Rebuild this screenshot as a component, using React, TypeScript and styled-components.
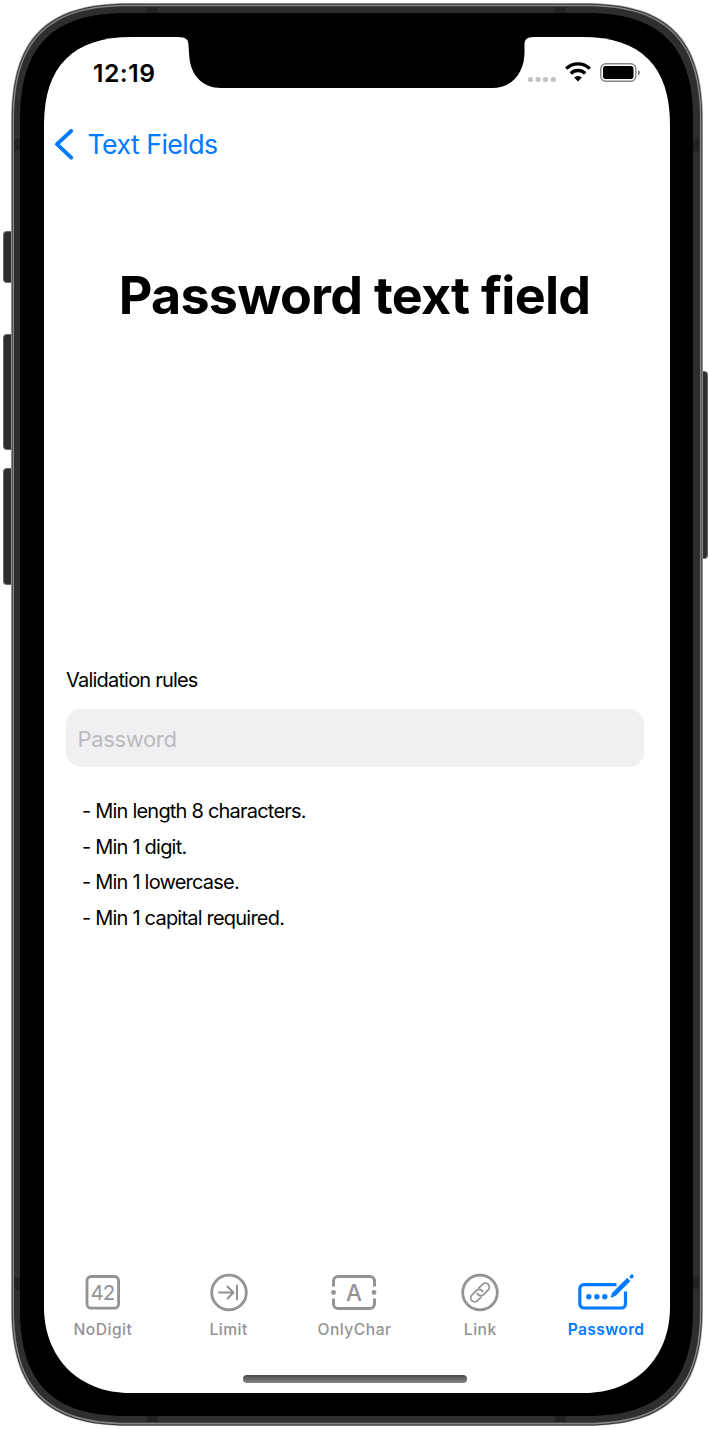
import React from "react";
import styled, { createGlobalStyle } from "styled-components";

const GlobalStyle = createGlobalStyle`
  * { box-sizing: border-box; }
  body { margin: 0; background: #fff; font-family: Inter, "Liberation Sans", sans-serif; color: #000; }
`;

const BLUE = "#007aff";
const GRAY = "#939393";

const Device = styled.div`
  display: grid;
  width: 709px;
  height: 1429px;
  overflow: hidden;
`;

const FrameDrawing = styled.svg`
  grid-area: 1 / 1;
  display: block;
`;

const Screen = styled.main`
  grid-area: 1 / 1;
  width: 626px;
  height: 1356px;
  margin: 37px 0 0 44px;
  display: flex;
  flex-direction: column;
`;

const StatusBar = styled.header`
  height: 72px;
  padding: 0 30px 0 49px;
  display: flex;
  justify-content: space-between;
  align-items: center;
`;

const Clock = styled.time`
  font-size: 24.7px;
  font-weight: 600;
  letter-spacing: 0.5px;
  line-height: 30px;
`;

const StatusIcons = styled.svg`
  display: block;
`;

const NavBar = styled.nav`
  height: 72px;
  padding-left: 10px;
  display: flex;
  align-items: center;
`;

const BackButton = styled.button`
  display: flex;
  align-items: center;
  gap: 13.5px;
  padding: 0;
  border: 0;
  background: none;
  color: ${BLUE};
  font: 400 26.7px/32px Inter, sans-serif;
  letter-spacing: -0.55px;
`;

const BackLabel = styled.span`
  padding-bottom: 2px;
`;

const Title = styled.h1`
  margin: 0;
  padding: 83px 5px 0 0;
  font-size: 52px;
  line-height: 64px;
  font-weight: 700;
  text-align: center;
  letter-spacing: -0.74px;
  white-space: nowrap;
`;

const Form = styled.section`
  flex: 1;
  padding: 339px 26px 0 22px;
  display: flex;
  flex-direction: column;
`;

const Label = styled.label`
  font-size: 20px;
  line-height: 26px;
  letter-spacing: -0.8px;
  padding-bottom: 16px;
`;

const Field = styled.input`
  width: 578px;
  height: 58px;
  padding: 1px 11.5px 0;
  border: 0;
  border-radius: 15px;
  background: #f0f0f3;
  font: 400 22px/30px Inter, sans-serif;
  letter-spacing: -0.35px;
  outline: none;
  &::placeholder { color: #bbbbbd; opacity: 1; }
`;

const Rules = styled.ul`
  list-style: none;
  margin: 0;
  padding: 27px 0 0 16px;
`;

const Rule = styled.li`
  font-size: 20px;
  line-height: 35.5px;
  letter-spacing: -0.79px;
`;

const TabBar = styled.footer`
  margin: 0 1px 0 -4px;
  height: 105px;
  display: grid;
  grid-template-columns: repeat(5, 1fr);
  align-items: start;
`;

const Tab = styled.button<{ $active?: boolean }>`
  display: flex;
  flex-direction: column;
  align-items: center;
  gap: 5px;
  padding: 0;
  border: 0;
  background: none;
  color: ${(p) => (p.$active ? BLUE : GRAY)};
  font: ${(p) => (p.$active ? 600 : 500)} 15.6px/22px Inter, sans-serif;
  letter-spacing: ${(p) => (p.$active ? 0.35 : 0.5)}px;
`;

const TabIcon = styled.svg`
  display: block;
  width: 60px;
  height: 44px;
  fill: none;
  stroke: currentColor;
  stroke-linecap: round;
  stroke-linejoin: round;
`;

const HomeIndicator = styled.div`
  width: 224px;
  height: 8px;
  margin: 0 0 10px 199px;
  border-radius: 4px;
  background: linear-gradient(#4a4a4a, #858585);
`;

const tabs: { name: string; icon: React.ReactNode; active?: boolean }[] = [
  {
    name: "NoDigit",
    icon: (
      <>
        <rect x="14" y="6.5" width="31.6" height="31.6" rx="4" strokeWidth="2.8" />
        <text x="29.5" y="29.7" textAnchor="middle" fontSize="20.5" fontWeight="400" letterSpacing="-0.9" fill="currentColor" stroke="none">42</text>
      </>
    ),
  },
  {
    name: "Limit",
    icon: (
      <>
        <circle cx="30" cy="22.5" r="17.3" strokeWidth="2.8" />
        <path d="M20 22.5h14M28.5 16.5l6 6-6 6M38 15.5v14" strokeWidth="2" />
      </>
    ),
  },
  {
    name: "OnlyChar",
    icon: (
      <>
        <path d="M9.5 16.5V11A4.5 4.5 0 0 1 14 6.5h32a4.5 4.5 0 0 1 4.5 4.5v5.5M9.5 28.5V34a4.5 4.5 0 0 0 4.5 4.5h32a4.5 4.5 0 0 0 4.5-4.5v-5.5" strokeWidth="3" strokeLinecap="butt" />
        <circle cx="9.5" cy="22.5" r="2.4" fill="currentColor" stroke="none" />
        <circle cx="50" cy="22.5" r="2.4" fill="currentColor" stroke="none" />
        <text x="30" y="30.6" textAnchor="middle" fontSize="22.5" fontWeight="500" letterSpacing="0" fill="currentColor" stroke="none">A</text>
      </>
    ),
  },
  {
    name: "Link",
    icon: (
      <>
        <circle cx="30" cy="22.5" r="17.3" strokeWidth="2.8" />
        <g transform="translate(30 22.5) rotate(-45)" strokeWidth="1.7">
          <path d="M-2.5 4H-7.6a4 4 0 0 1 0-8H-1a4 4 0 0 1 3.6 5.2" />
          <path d="M2.5-4H7.6a4 4 0 0 1 0 8H1a4 4 0 0 1-3.6-5.2" />
        </g>
      </>
    ),
  },
  {
    name: "Password",
    active: true,
    icon: (
      <>
        <path d="M40.5 14.7H7.8a4 4 0 0 0-4 4V34a4 4 0 0 0 4 4H45.5a4 4 0 0 0 4-4V21.5" strokeWidth="3.2" strokeLinecap="butt" />
        <circle cx="12.8" cy="26.7" r="2.7" fill="currentColor" stroke="none" />
        <circle cx="20.9" cy="26.7" r="2.7" fill="currentColor" stroke="none" />
        <circle cx="28.8" cy="26.7" r="2.7" fill="currentColor" stroke="none" />
        <path d="M35.4 26.9l1.3-3.6L51.2 8.8l2.3 2.3L39 25.5z" fill="currentColor" strokeWidth="1.3" />
        <path d="M55.4 6.7l.5-.5" strokeWidth="3.6" />
      </>
    ),
  },
];

const rules = ["Min length 8 characters.", "Min 1 digit.", "Min 1 lowercase.", "Min 1 capital required."];

/* Rounded rectangle with continuous corners: l is the corner's reach, c its control offset. */
function squircle(x: number, y: number, r: number, b: number, l: number, c: number, lb = l, cb = c) {
  return [
    `M${x} ${y + l}`,
    `C${x} ${y + c} ${x + c} ${y} ${x + l} ${y}`,
    `H${r - l}`,
    `C${r - c} ${y} ${r} ${y + c} ${r} ${y + l}`,
    `V${b - lb}`,
    `C${r} ${b - cb} ${r - cb} ${b} ${r - lb} ${b}`,
    `H${x + lb}`,
    `C${x + cb} ${b} ${x} ${b - cb} ${x} ${b - lb}`,
    "Z",
  ].join("");
}

function PhoneFrame() {
  return (
    <FrameDrawing width="709" height="1429" viewBox="0 0 709 1429" aria-hidden="true">
      <g fill="#2e2e2e" stroke="#6a6a6a">
        <rect x="3.5" y="231.5" width="14" height="51" rx="3" />
        <rect x="3.5" y="334.5" width="14" height="115" rx="3" />
        <rect x="3.5" y="468.5" width="14" height="116" rx="3" />
        <rect x="695" y="371.5" width="12.5" height="187" rx="3" />
      </g>
      <path d={squircle(11, 3, 703, 1426, 117, 35)} fill="#a4a4a4" />
      <path d={squircle(11.8, 3.8, 702.2, 1425.4, 116, 35)} fill="#333" />
      <path d={squircle(12.6, 4.8, 701.4, 1424.4, 115, 35)} fill="#858585" />
      <path d={squircle(14, 6.2, 700, 1422.8, 114, 34)} fill="#2e2e2e" />
      <g fill="#222">
        <rect x="147" y="7" width="11" height="6" />
        <rect x="555" y="7" width="11" height="6" />
        <rect x="147" y="1416" width="11" height="6" />
        <rect x="555" y="1416" width="11" height="6" />
        <rect x="14" y="139" width="6" height="12" />
        <rect x="693" y="139" width="6" height="12" />
        <rect x="14" y="1277" width="6" height="12" />
        <rect x="693" y="1277" width="6" height="12" />
      </g>
      <path d={squircle(20, 13, 693, 1416, 106, 33)} />
      <path d={squircle(44, 37, 670, 1393, 88, 29, 86, 35)} fill="#fff" />
      <path d="M178 36V37C186 37 188 40 188.3 43C188.8 50 189 54 190 62C193 77 204 88 221 88H492C512 88 524.5 73 524.5 52V45C524.5 40 526 37 534 37V36Z" />
    </FrameDrawing>
  );
}

export default function App() {
  return (
    <Device>
      <GlobalStyle />
      <PhoneFrame />
      <Screen>
        <StatusBar>
          <Clock>12:19</Clock>
          <StatusIcons width="114" height="26" viewBox="0 0 114 26" fill="none">
            <g fill="#c4c4c4">
              <rect x="2" y="17" width="5" height="5" rx="1.7" />
              <rect x="9.5" y="17" width="5" height="5" rx="1.7" />
              <rect x="17" y="17" width="5" height="5" rx="1.7" />
              <rect x="24.8" y="17" width="5" height="5" rx="1.7" />
            </g>
            <g stroke="#000" strokeWidth="3.4">
              <path d="M40.2 8.6a17 17 0 0 1 23.6 0" />
              <path d="M44.8 13.4a10.4 10.4 0 0 1 14.4 0" />
            </g>
            <path d="M52 21.5l-3.9-4a5.6 5.6 0 0 1 7.8 0z" fill="#000" />
            <rect x="74.8" y="3.7" width="35" height="17.6" rx="5" stroke="#858585" strokeWidth="1.4" />
            <rect x="77" y="6" width="30.5" height="13" rx="2.8" fill="#000" />
            <path d="M112 10v5.4c2.6-1 2.6-4.4 0-5.4z" fill="#858585" />
          </StatusIcons>
        </StatusBar>
        <NavBar>
          <BackButton>
            <svg width="20" height="32" viewBox="0 0 20 32" fill="none">
              <path d="M17.2 2L3 15.2l14.2 13.5" stroke={BLUE} strokeWidth="3.8" strokeLinecap="round" strokeLinejoin="round" />
            </svg>
            <BackLabel>Text Fields</BackLabel>
          </BackButton>
        </NavBar>
        <Title>Password text field</Title>
        <Form>
          <Label htmlFor="password">Validation rules</Label>
          <Field id="password" type="password" placeholder="Password" />
          <Rules>
            {rules.map((r) => (
              <Rule key={r}>- {r}</Rule>
            ))}
          </Rules>
        </Form>
        <TabBar>
          {tabs.map((t) => (
            <Tab key={t.name} $active={t.active}>
              <TabIcon viewBox="0 0 60 44">{t.icon}</TabIcon>
              {t.name}
            </Tab>
          ))}
        </TabBar>
        <HomeIndicator />
      </Screen>
    </Device>
  );
}
